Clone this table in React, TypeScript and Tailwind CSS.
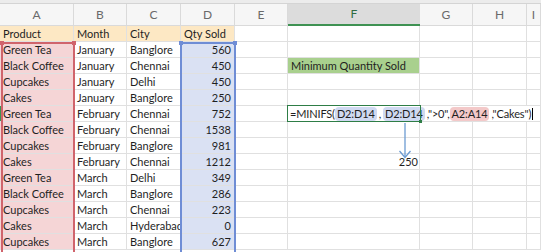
import React from 'react';

type Row = [string, string, string, number];

const rows: Row[] = [
  ['Green Tea', 'January', 'Banglore', 560],
  ['Black Coffee', 'January', 'Chennai', 450],
  ['Cupcakes', 'January', 'Delhi', 450],
  ['Cakes', 'January', 'Banglore', 250],
  ['Green Tea', 'February', 'Chennai', 752],
  ['Black Coffee', 'February', 'Chennai', 1538],
  ['Cupcakes', 'February', 'Banglore', 981],
  ['Cakes', 'February', 'Chennai', 1212],
  ['Green Tea', 'March', 'Delhi', 349],
  ['Black Coffee', 'March', 'Banglore', 286],
  ['Cupcakes', 'March', 'Chennai', 223],
  ['Cakes', 'March', 'Hyderabad', 0],
  ['Cupcakes', 'March', 'Banglore', 627],
];

const letters = ['A', 'B', 'C', 'D', 'E', 'F', 'G', 'H', 'I'];

const cell =
  'h-[16px] border-r border-b border-[#e0e0e0] leading-[16px] whitespace-nowrap overflow-hidden px-[3px]';

function Formula() {
  return (
    <div className="relative h-[16px] border-r border-b border-[#e0e0e0]">
      <span className="absolute left-0 top-0 z-10 flex h-[15px] items-center whitespace-nowrap bg-white pl-[2px] pr-[3px] text-[11px] leading-[15px] tracking-[-0.15px]">
        <span>=MINIFS(</span>
        <span className="rounded-[4px] bg-[#cfd9f1] px-[2px] leading-[14px]">D2:D14</span>
        <span className="px-[2px]">,</span>
        <span className="rounded-[4px] bg-[#cfd9f1] px-[2px] leading-[14px]">D2:D14</span>
        <span className="pl-[2px]">,"&gt;0",</span>
        <span className="rounded-[4px] bg-[#f3c9c9] px-[2px] leading-[14px]">A2:A14</span>
        <span className="pl-[2px]">,"Cakes")</span>
        <span className="ml-[1px] inline-block h-[12px] w-[1px] bg-black" />
      </span>
      <div className="pointer-events-none absolute -left-[1px] -top-[1px] z-20 h-[17px] w-[134px] border border-[#2e7d46]">
        <div className="absolute -bottom-[2px] -right-[2px] h-[3px] w-[3px] bg-[#2e7d46]" />
      </div>
    </div>
  );
}

export default function App() {
  return (
    <div
      className="relative h-[252px] w-[541px] overflow-hidden bg-white text-[11px] text-[#1f1f1f]"
      style={{ fontFamily: 'Lato, "Open Sans", sans-serif' }}
    >
      <div className="h-[4px] border-b border-[#d4d4d4] bg-[#ececec]" />
      <div className="grid grid-cols-[74px_53px_54px_54px_53px_132px_53px_54px_14px]">
        {/* column letters */}
        {letters.map((l) =>
          l === 'F' ? (
            <div
              key={l}
              className="h-[22px] border-b-2 border-[#3f9253] bg-[#dcdcdc] text-center text-[12px] leading-[20px] text-[#2e6b3f]"
            >
              {l}
            </div>
          ) : (
            <div
              key={l}
              className="h-[22px] border-r border-b border-[#dadada] bg-[#f6f6f6] text-center text-[12px] leading-[21px] text-[#6a6a6a]"
            >
              {l}
            </div>
          )
        )}

        {/* header row */}
        <div className={`${cell} bg-[#fde8c4]`}>Product</div>
        <div className={`${cell} bg-[#fde8c4]`}>Month</div>
        <div className={`${cell} bg-[#fde8c4]`}>City</div>
        <div className={`${cell} bg-[#fde8c4]`}>Qty Sold</div>
        <div className={cell} />
        <div className={cell} />
        <div className={cell} />
        <div className={cell} />
        <div className={cell} />

        {rows.map(([product, month, city, qty], i) => (
          <React.Fragment key={i}>
            <div
              className={`${cell} bg-[#f5d5d6] ${i === 4 ? 'shadow-[inset_2px_0_0_#3f9253]' : ''}`}
            >
              {product}
            </div>
            <div className={cell}>{month}</div>
            <div className={cell}>{city}</div>
            <div className={`${cell} bg-[#dae1f3] text-right`}>{qty}</div>
            <div className={cell} />
            {i === 1 ? (
              <div className={`${cell} bg-[#a9d08e]`}>Minimum Quantity Sold</div>
            ) : i === 4 ? (
              <Formula />
            ) : i === 7 ? (
              <div className={`${cell} pr-[1px] text-right`}>250</div>
            ) : (
              <div className={cell} />
            )}
            <div className={cell} />
            <div className={cell} />
            <div className={cell} />
          </React.Fragment>
        ))}
      </div>

      {/* range outlines for A2:A14 and D2:D14 */}
      <div className="pointer-events-none absolute left-[1px] top-[42px] h-[220px] w-[74px] border-2 border-[#d0646c]">
        <div className="absolute -left-[3px] -top-[3px] h-[4px] w-[4px] bg-[#d0646c]" />
        <div className="absolute -right-[3px] -top-[3px] h-[4px] w-[4px] bg-[#d0646c]" />
      </div>
      <div className="pointer-events-none absolute left-[180px] top-[42px] h-[220px] w-[56px] border-2 border-[#6f8dd5]">
        <div className="absolute -left-[3px] -top-[3px] h-[4px] w-[4px] bg-[#6f8dd5]" />
        <div className="absolute -right-[3px] -top-[3px] h-[4px] w-[4px] bg-[#6f8dd5]" />
      </div>

      {/* arrow from the formula down to its result */}
      <svg className="pointer-events-none absolute left-[398px] top-[123px]" width="14" height="36" viewBox="0 0 14 36">
        <path d="M7 0 V34" stroke="#6c9bd2" strokeWidth="1.3" fill="none" />
        <path d="M1.5 28 L7 34.5 L12.5 28" stroke="#6c9bd2" strokeWidth="1.3" fill="none" />
      </svg>
    </div>
  );
}
